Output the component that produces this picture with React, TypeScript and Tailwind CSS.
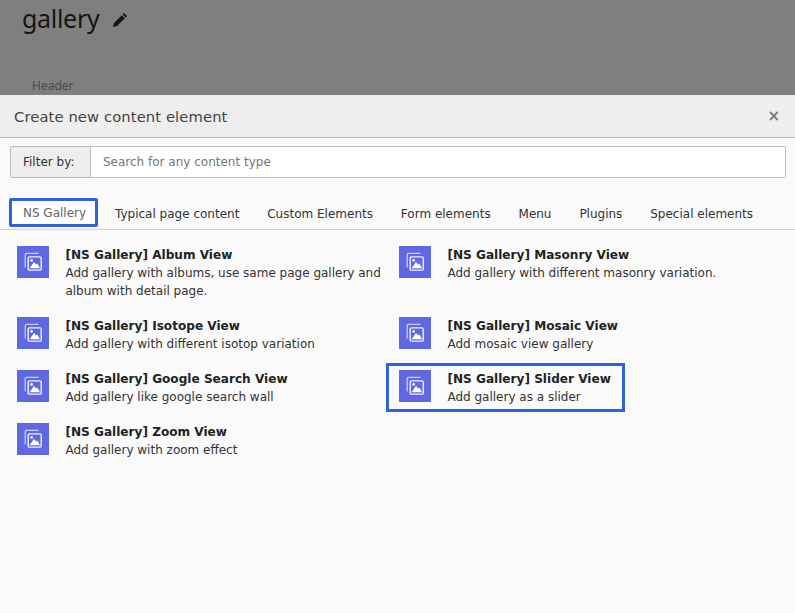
const items = [
  { title: "[NS Gallery] Album View", text: "Add gallery with albums, use same page gallery and album with detail page." },
  { title: "[NS Gallery] Masonry View", text: "Add gallery with different masonry variation." },
  { title: "[NS Gallery] Isotope View", text: "Add gallery with different isotop variation" },
  { title: "[NS Gallery] Mosaic View", text: "Add mosaic view gallery" },
  { title: "[NS Gallery] Google Search View", text: "Add gallery like google search wall" },
  { title: "[NS Gallery] Slider View", text: "Add gallery as a slider", marked: true },
  { title: "[NS Gallery] Zoom View", text: "Add gallery with zoom effect" },
]

const tabs = ["Typical page content", "Custom Elements", "Form elements", "Menu", "Plugins", "Special elements"]

function GalleryIcon() {
  return (
    <div className="flex h-8 w-8 shrink-0 items-center justify-center bg-[#5f68e0]">
      <svg width="22" height="22" viewBox="0 0 22 22" fill="none">
        <path d="M3.2 16.5V3.8C3.2 3 3.8 2.4 4.6 2.4H16.5" stroke="#c9cdf6" strokeWidth="1.3" />
        <rect x="6.2" y="5.9" width="13" height="13.2" rx="1.2" stroke="#eef0ff" strokeWidth="1.4" />
        <circle cx="9.6" cy="9.4" r="1.3" fill="#ffffff" />
        <path d="M7.6 17.2L12 11L14.2 13.6L15.4 12.6L18 17.2Z" fill="#ffffff" />
      </svg>
    </div>
  )
}

export default function App() {
  return (
    <div className="flex h-[613px] w-[795px] flex-col overflow-hidden bg-[#fafafa] font-['DejaVu_Sans',sans-serif] text-[12px] text-[#333333]">
      <div className="h-[95px] shrink-0 bg-[#7f7f7f] pl-[22px]">
        <div className="flex items-center">
          <h1 className="font-['Noto_Sans',sans-serif] text-[25px] leading-[36px] tracking-[-0.3px] text-[#151515]">gallery</h1>
          <svg className="ml-[13px] mt-[3px]" width="16" height="16" viewBox="0 0 16 16" fill="#151515">
            <path d="M12 1L15 4L13.6 5.4L10.6 2.4Z" />
            <path d="M9.8 3.2L12.8 6.2L5 14L1 15L2 11Z" />
          </svg>
        </div>
        <div className="pl-[10px] pt-[42px] font-['Noto_Sans',sans-serif] text-[12px] leading-[16px] text-[#4a4a4a]">Header</div>
      </div>

      <div className="flex h-[43px] shrink-0 items-center justify-between border-b border-[#bdbdbd] bg-[#eeeeee] pl-[14px] pr-[15px]">
        <span className="pt-[2px] text-[14.75px] tracking-[0.1px] text-[#444444]">Create new content element</span>
        <span className="text-[15px] font-bold leading-none text-[#777777]">×</span>
      </div>

      <div className="ml-[10px] mr-[9px] mt-[8px] flex h-[32px] shrink-0">
        <div className="flex w-[81px] items-center rounded-l-[2px] border border-[#bbbbbb] bg-[#eeeeee] pl-[12px] text-[#333333]">Filter by:</div>
        <div className="flex flex-1 items-center rounded-r-[2px] border border-l-0 border-[#bbbbbb] bg-white pl-[12px] text-[#777777]">Search for any content type</div>
      </div>

      <div className="mt-[19px] flex h-[33px] shrink-0 items-start border-b border-[#d4d4d4] pl-[9px]">
        <div className="mt-px flex h-[29px] w-[89px] items-center justify-center rounded-[2px] border-[3px] border-[#2f63dc] bg-white pl-[2px] text-[#666666]">NS Gallery</div>
        <div className="flex gap-[27.9px] pl-[17px] pt-[10px] leading-[15px]">
          {tabs.map((tab) => (
            <span key={tab}>{tab}</span>
          ))}
        </div>
      </div>

      <div className="grid grid-cols-[382px_1fr] pl-[17px] pt-[16px]">
        {items.map((item) => (
          <div key={item.title} className={item.title.includes("Album") || item.title.includes("Masonry") ? "h-[71px]" : "h-[53px]"}>
            <div className={item.marked ? "relative flex gap-[16.4px]" : "flex gap-[16.4px]"}>
              {item.marked && <div className="absolute left-[-13px] top-[-7px] h-[49px] w-[239px] border-[3px] border-[#2f63dc]" />}
              <GalleryIcon />
              <div className="w-[320px]">
                <div className="text-[12.1px] font-bold leading-[18px] text-[#222222]">{item.title}</div>
                <div className="leading-[18px]">{item.text}</div>
              </div>
            </div>
          </div>
        ))}
      </div>
    </div>
  )
}
